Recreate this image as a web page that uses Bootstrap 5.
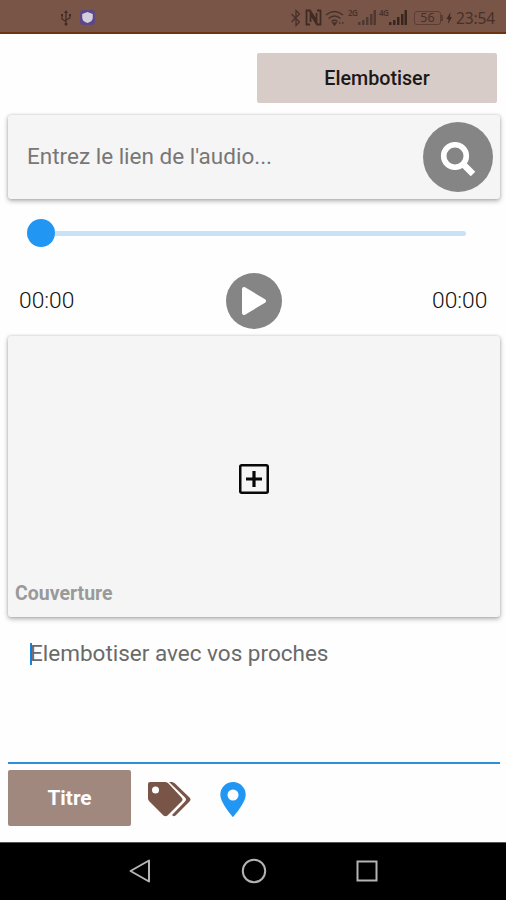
<!DOCTYPE html>
<html lang="fr">
<head>
<meta charset="utf-8">
<meta name="viewport" content="width=device-width, initial-scale=1">
<title>Elembotiser</title>
<link href="https://cdn.jsdelivr.net/npm/bootstrap@5.3.0/dist/css/bootstrap.min.css" rel="stylesheet">
<style>
body{font-family:Roboto,"Liberation Sans",sans-serif;background:#fefefe;width:506px;height:900px;overflow:hidden}
svg{display:block;flex:none}
.status{height:34px;background:#795548;border-bottom:2px solid #6b3510;padding:3px 10px 0 60px;color:#463029;font-family:"Noto Sans",sans-serif}
.status-end svg{margin-right:3px}
.net{font-size:8px;line-height:8px;font-weight:600;letter-spacing:-.7px;height:18px;width:10px}
.batt{width:27px;height:14px;border:1px solid #5a3d33;border-radius:3px;font-size:12.5px;line-height:12px;text-align:center}
.clock{font-size:15.5px;line-height:20px;width:40px;letter-spacing:-.1px}
.top-row{height:81px;padding:19px 9px 0 0}
.btn-send{width:240px;height:50px;background:#d7ccc8;color:#1c1917;font-size:19.7px;font-weight:500;border-radius:2px;border:0;padding:2px 0 0}
.panel{background:#f5f5f5;border-radius:3px;box-shadow:0 2px 5px rgba(0,0,0,.3),0 0 3px rgba(0,0,0,.16);margin:0 6px 0 8px}
.search{height:84px;padding:0 7px 0 19px}
.hint{font-size:22.5px;color:#777;line-height:28px;margin-top:-2px}
.disc{background:#858585;border-radius:50%}
.disc-l{width:70px;height:70px;padding-top:3px}
.disc-s{width:56px;height:56px;margin-top:-1px}
.slider{height:68px;padding:0 40px 0 27px}
.thumb{width:28px;height:28px;background:#2196f3;border-radius:50%}
.track{height:5px;background:#c7e2f9;border-radius:0 3px 3px 0}
.player{height:69px;padding:0 18px 0 19px}
.time{font-size:22.8px;color:#111;width:56px;font-weight:300;white-space:nowrap}
.cover{height:281px;padding:128px 7px 9px}
.cover-label{font-size:19.5px;line-height:28px;font-weight:700;color:#9a9a9a}
.field{height:147px;margin:0 6px 0 8px;padding:20px 22px;border-bottom:2px solid #2a90dc}
.caret{width:2px;height:22px;background:#1784dd;margin:6px -2px 0 0}
.field-text{font-size:22.5px;line-height:33px;color:#6a6a6a}
.tools{height:78px;padding:6px 8px 0}
.btn-title{width:123px;height:56px;background:#a1887f;color:#fff;font-size:20.8px;font-weight:700;border-radius:2px;border:0;padding:2px 0 0}
.tags{margin:12px 0 0 17px}
.pin{margin:12px 0 0 28px}
.sysnav{height:58px;background:#000;border-top:1px solid #555;padding-bottom:1px}
.home{margin:0 89px 0 90px}
</style>
</head>
<body>
<header class="status d-flex align-items-center justify-content-between">
  <div class="d-flex align-items-center">
    <svg width="12" height="16" viewBox="0 0 12 16" fill="none" stroke="#402b24" stroke-width="1.2"><path d="M6 2v12M2 6v3l4 2.500M10 5v3L6 10"/><path d="M6 0l2 3H4zM1 4h2v2H1zM9 4h2v2H9z" fill="#402b24" stroke="none"/><circle cx="6" cy="14" r="1.500" fill="#402b24" stroke="none"/></svg>
    <svg class="ms-2" width="15" height="15" viewBox="0 0 15 15"><rect width="15" height="15" rx="3.500" fill="#5c4888"/><path d="M7.500 2L12.800 4v3.500q0 4-5.300 5.500-5.300-1.500-5.300-5.500V4z" fill="#d3cfdb"/></svg>
  </div>
  <div class="status-end d-flex align-items-center">
    <svg width="12" height="18" viewBox="0 0 12 18" fill="none" stroke="#463029" stroke-width="1.300"><path d="M1.500 5l8 8L6 16.500v-15L9.500 5l-8 8"/></svg>
    <svg width="17" height="17" viewBox="0 0 17 17" fill="none" stroke="#402b24"><path d="M5 15.500H1.500v-14H5L11.500 12V4" stroke-width="1.800"/><path d="M12 1.500h3.500v14H12L5.500 5v8" stroke-width="1.800"/></svg>
    <svg width="20" height="17" viewBox="0 0 20 17" fill="none" stroke="#463029" stroke-width="1.500"><path d="M1 6q8.500-7 17 0M3.500 9.500q6-5 12 0M6.500 12.500q3-2.500 6 0"/><path d="M8 14h3l-1.500 2zM14 14h1.500M17 14h1.500"/></svg>
    <span class="net">2G</span>
    <svg width="18" height="17" viewBox="0 0 18 17" fill="#503931"><path d="M0 13h2.500v3H0zM4 11h2.500v5H4zM8 8h2.500v8H8zM12 5h2.500v11H12zM15.500 1H18v15h-2.500z"/></svg>
    <span class="net">4G</span>
    <svg width="18" height="17" viewBox="0 0 18 17" fill="#39261f"><path d="M0 13h2.500v3H0zM4 11h2.500v5H4zM8 8h2.500v8H8zM12 5h2.500v11H12zM15.500 1H18v15h-2.500z"/></svg>
    <span class="batt ms-1">56</span>
    <svg width="12" height="14" viewBox="0 0 12 14" fill="#402b24"><path d="M0 4h2v6H0z" fill="#5a3d33"/><path d="M9.500 1L5.500 8h2l-.5 5 4-7H9z"/></svg>
    <span class="clock">23:54</span>
  </div>
</header>
<main>
  <div class="top-row d-flex justify-content-end"><button class="btn btn-send">Elembotiser</button></div>
  <section class="panel search d-flex align-items-center justify-content-between">
    <span class="hint">Entrez le lien de l'audio...</span>
    <div class="disc disc-l d-flex align-items-center justify-content-center">
      <svg width="36" height="36" viewBox="0 0 36 36" fill="none" stroke="#fff"><circle cx="15" cy="15" r="11.300" stroke-width="5.600"/><path d="M23 23L33 33" stroke-width="6.400"/></svg>
    </div>
  </section>
  <div class="slider d-flex align-items-center"><div class="thumb"></div><div class="track flex-grow-1"></div></div>
  <div class="player d-flex align-items-center justify-content-between">
    <span class="time">00:00</span>
    <div class="disc disc-s d-flex align-items-center justify-content-center">
      <svg width="26" height="30" viewBox="0 0 26 30"><path d="M3 3L23 15 3 27z" fill="#fff" stroke="#fff" stroke-width="4" stroke-linejoin="round"/></svg>
    </div>
    <span class="time">00:00</span>
  </div>
  <section class="panel cover d-flex flex-column justify-content-between">
    <svg class="mx-auto" width="30" height="30" viewBox="0 0 30 30" fill="none" stroke="#080808"><rect x="1.250" y="1.250" width="27.500" height="27.500" rx="1.500" stroke-width="2.500"/><path d="M15 7v16M7 15h16" stroke-width="3.200"/></svg>
    <span class="cover-label">Couverture</span>
  </section>
  <div class="field d-flex align-items-start"><span class="caret"></span><span class="field-text">Elembotiser avec vos proches</span></div>
  <div class="tools d-flex">
    <button class="btn btn-title">Titre</button>
    <svg class="tags" width="44" height="36" viewBox="0 0 44 36"><path d="M2 0h15.500q1.500 0 3 1.500L33.500 15.500q2 2 0 4L19.500 33.500q-2 1.500-4 0L1 19 0 17V2q0-2 2-2z" fill="#795548"/><circle cx="7.500" cy="8" r="3.500" fill="#fff"/><path d="M21 0h3q1.500 0 3 1.500L41.500 15.500q2 2 0 4L27.500 33.500q-2 1.500-3.500-.5L37 19.500q2-2 0-4z" fill="#795548"/></svg>
    <svg class="pin" width="26" height="35" viewBox="0 0 26 35"><path fill="#2196f3" fill-rule="evenodd" d="M13 0A12.700 12.700 0 0 0 .3 12.700C.3 21 13 35 13 35S25.700 21 25.700 12.700A12.700 12.700 0 0 0 13 0zm0 7.500a5.500 5.500 0 1 1 0 11 5.500 5.500 0 0 1 0-11z"/></svg>
  </div>
</main>
<nav class="sysnav d-flex align-items-center justify-content-center">
  <svg width="22" height="26" viewBox="0 0 22 26" fill="none" stroke="#b4b4b4" stroke-width="2" stroke-linejoin="round"><path d="M1.500 13L20 2.500v21z"/></svg>
  <svg class="home" width="26" height="26" viewBox="0 0 26 26" fill="none" stroke="#b4b4b4" stroke-width="2"><circle cx="13" cy="13" r="11.200"/></svg>
  <svg width="22" height="26" viewBox="0 0 22 26" fill="none" stroke="#b4b4b4" stroke-width="2"><path d="M1.500 3.500h19v19h-19z"/></svg>
</nav>
<script src="https://cdn.jsdelivr.net/npm/bootstrap@5.3.0/dist/js/bootstrap.bundle.min.js"></script>
</body>
</html>
